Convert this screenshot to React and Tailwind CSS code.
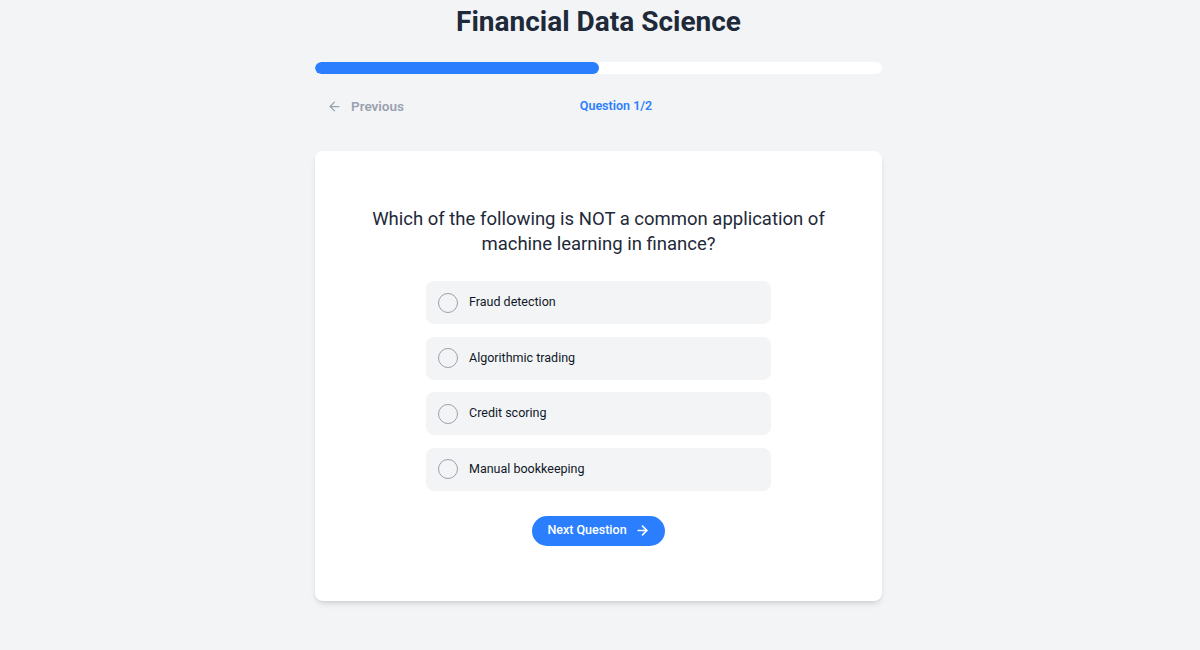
import React, { useState } from "react";
import { ArrowLeft, ArrowRight } from "lucide-react";

const options = [
  "Fraud detection",
  "Algorithmic trading",
  "Credit scoring",
  "Manual bookkeeping",
];

const App = () => {
  const [selected, setSelected] = useState(null);
  const progress = 50;

  return (
    <div
      className="min-h-screen bg-gray-100 text-gray-800"
      style={{ fontFamily: "Roboto, 'Liberation Sans', sans-serif" }}
    >
      <div className="mx-auto w-[570px] pr-[3px] pt-[5px]">
        <h1 className="text-center text-[28px] leading-[34px] font-bold text-gray-800">
          Financial Data Science
        </h1>

        <div className="mt-[23px] h-3 w-full rounded-full bg-white overflow-hidden">
          <div
            className="h-full rounded-full bg-blue-500"
            style={{ width: `${progress}%` }}
          ></div>
        </div>

        <div className="mt-[19px] flex h-[26px] items-center justify-between">
          <button
            disabled
            className="flex items-center gap-[9px] px-3 text-[13.5px] font-semibold text-gray-400 cursor-not-allowed"
          >
            <ArrowLeft size={15} strokeWidth={2} />
            Previous
          </button>
          <span className="text-[12.5px] font-semibold text-blue-500">
            Question 1/2
          </span>
          <div className="w-[66px]"></div>
        </div>

        <div className="mt-[32px] rounded-lg bg-white px-14 pt-[56px] pb-[55px] shadow-md">
          <h2 className="text-center text-[18.5px] leading-[25px] text-gray-800">
            Which of the following is NOT a common application of machine
            learning in finance?
          </h2>

          <div className="mx-auto mt-[24px] flex w-[345px] flex-col gap-[12.5px]">
            {options.map((opt, i) => (
              <button
                key={opt}
                onClick={() => setSelected(i)}
                className="flex h-[43px] items-center gap-[11px] rounded-lg bg-gray-100 pl-3 text-left text-[12.5px] text-gray-900"
              >
                <span
                  className={
                    selected === i
                      ? "h-5 w-5 rounded-full border-[5px] border-blue-500"
                      : "h-5 w-5 rounded-full border-[1.5px] border-gray-400"
                  }
                ></span>
                {opt}
              </button>
            ))}
          </div>

          <div className="mt-[25px] flex justify-center">
            <button className="flex h-[30px] items-center gap-2 rounded-full bg-blue-500 px-[15px] text-[12.5px] font-medium text-white">
              Next Question
              <ArrowRight size={15} strokeWidth={2.5} />
            </button>
          </div>
        </div>
      </div>
    </div>
  );
};

export default App;
